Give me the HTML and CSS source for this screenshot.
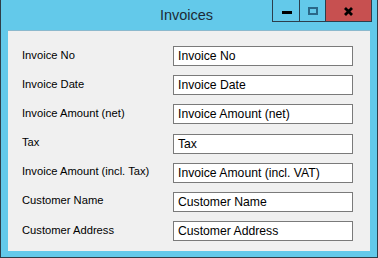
FILE: index.html
```html
<!DOCTYPE html>
<html>
<head>
<meta charset="utf-8">
<link rel="stylesheet" href="styles.css">
</head>
<body>
<div class="window">
  <div class="titlebar">
    <div class="spacer"></div>
    <div class="title">Invoices</div>
    <div class="controls">
      <div class="btn btn-min"><span class="min-glyph"></span></div>
      <div class="btn btn-max"><span class="max-glyph"></span></div>
      <div class="btn btn-close">
        <svg width="9" height="9" viewBox="0 0 9 9"><path d="M1 1 L8 8 M8 1 L1 8" stroke="#000" stroke-width="2.8" fill="none"/></svg>
      </div>
    </div>
  </div>
  <div class="content">
    <div class="form">
      <label class="lbl">Invoice No</label><div class="field">Invoice No</div>
      <label class="lbl">Invoice Date</label><div class="field">Invoice Date</div>
      <label class="lbl">Invoice Amount (net)</label><div class="field">Invoice Amount (net)</div>
      <label class="lbl">Tax</label><div class="field">Tax</div>
      <label class="lbl">Invoice Amount (incl. Tax)</label><div class="field">Invoice Amount (incl. VAT)</div>
      <label class="lbl">Customer Name</label><div class="field">Customer Name</div>
      <label class="lbl">Customer Address</label><div class="field">Customer Address</div>
    </div>
  </div>
</div>
</body>
</html>
```

FILE: styles.css
```css
* { box-sizing: border-box; }
html, body { margin: 0; padding: 0; }
body { width: 378px; height: 258px; overflow: hidden; font-family: "Liberation Sans", Arial, sans-serif; }
.window {
  width: 378px; height: 258px;
  background: #63c9ea;
  border: 1px solid #2e3d48;
  border-top: none;
  display: flex; flex-direction: column;
  padding: 0 6px 6px 6px;
}
.titlebar {
  height: 30px;
  display: grid;
  grid-template-columns: 1fr auto 1fr;
  align-items: start;
  margin: 0 -6px;
  padding: 0 5px 0 0;
}
.title {
  font-size: 14.5px;
  color: #1d2b36;
  padding-top: 7px;
  line-height: 17px;
}
.controls {
  justify-self: end;
  display: flex;
  height: 22px;
  border: 1px solid #2c3e4c;
  border-top: none;
}
.btn { height: 21px; display: flex; align-items: center; justify-content: center; }
.btn-min { width: 26px; }
.btn-max { width: 26px; border-left: 1px solid #2c3e4c; }
.btn-close { width: 46px; border-left: 1px solid #2c3e4c; background: #c75050; padding-top: 1px; }
.min-glyph { width: 10px; height: 3px; background: #000; margin-top: 4px; margin-left: 1px; }
.max-glyph { width: 10px; height: 8px; border: 2px solid #2a6888; margin-top: 1px; }
.content {
  flex: 1;
  background: #f0f0f0;
  border-top: 1px solid #8cb9cd;
  margin: 0 1px;
  padding: 15px 0 0 14px;
}
.form {
  display: grid;
  grid-template-columns: 151px 180px;
  grid-auto-rows: 20px;
  row-gap: 9.2px;
}
.lbl {
  font-size: 11.2px;
  color: #000;
  align-self: center;
  margin-top: -3px;
}
.field {
  border: 1px solid #7a7a7a;
  background: #fff;
  font-size: 12.2px;
  color: #000;
  padding: 2px 0 0 4px;
  line-height: 15px;
}
```
